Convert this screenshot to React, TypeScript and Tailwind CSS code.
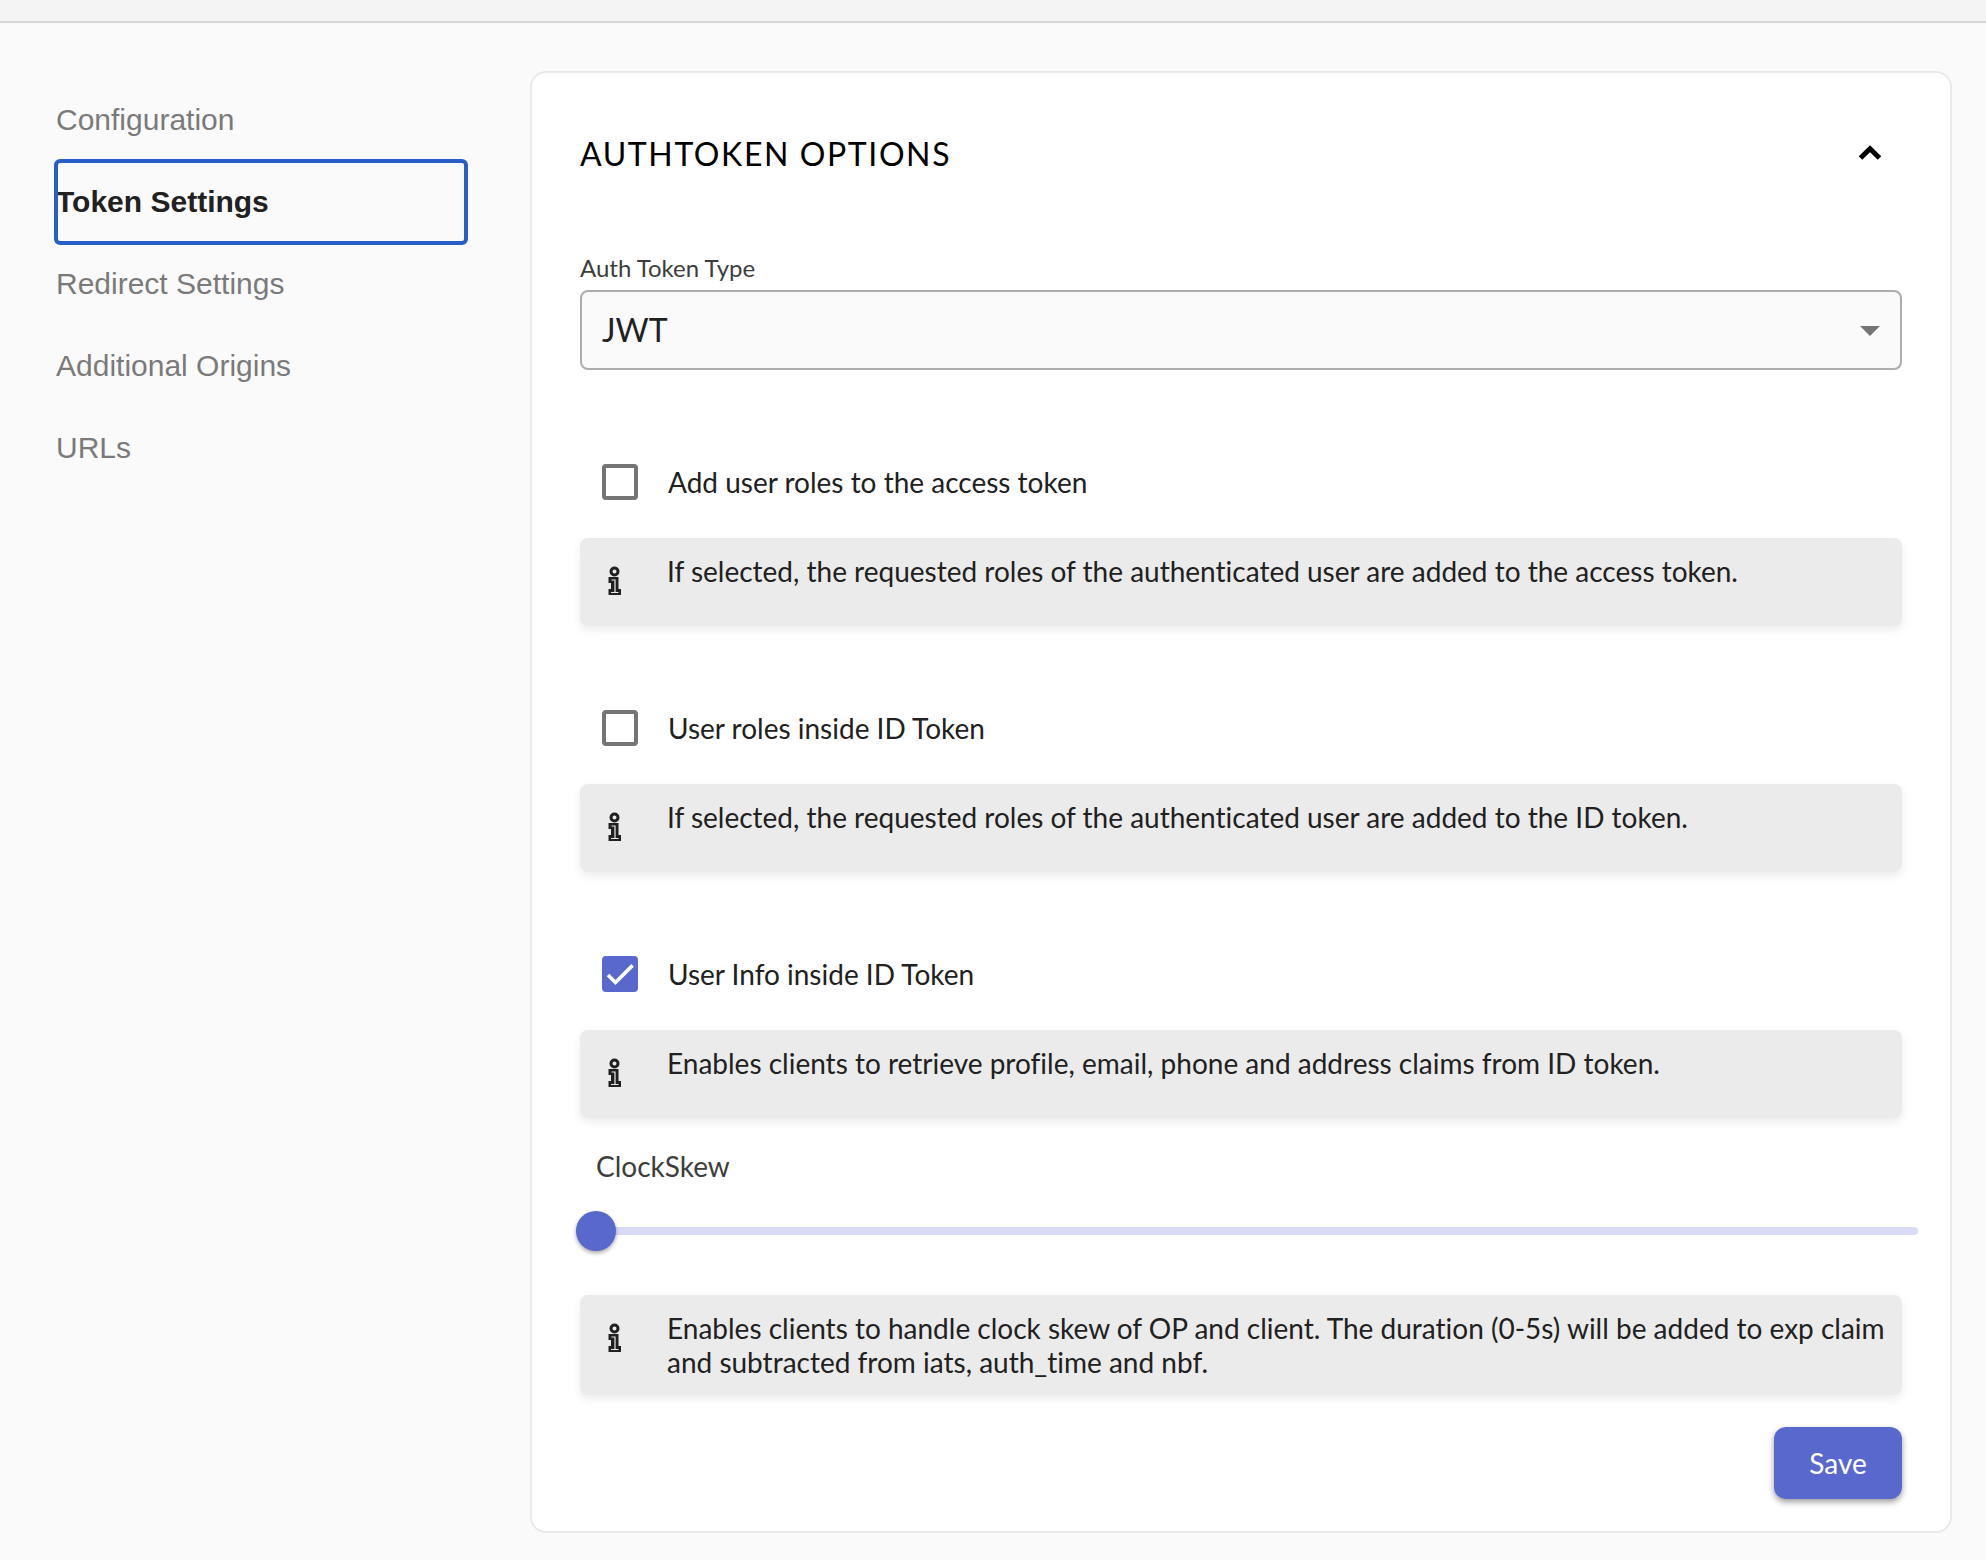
import { useState } from "react";

const NAV_ITEMS = ["Configuration", "Token Settings", "Redirect Settings", "Additional Origins", "URLs"];

const TOKEN_OPTIONS = [
  {
    id: "access-token-roles",
    label: "Add user roles to the access token",
    info: "If selected, the requested roles of the authenticated user are added to the access token.",
    checked: false,
  },
  {
    id: "id-token-roles",
    label: "User roles inside ID Token",
    info: "If selected, the requested roles of the authenticated user are added to the ID token.",
    checked: false,
  },
  {
    id: "id-token-userinfo",
    label: "User Info inside ID Token",
    info: "Enables clients to retrieve profile, email, phone and address claims from ID token.",
    checked: true,
  },
];

function InfoIcon() {
  return (
    <svg width="14" height="30" viewBox="0 0 14 30" fill="none" aria-hidden="true">
      <circle cx="6.5" cy="5.5" r="3.5" stroke="#212121" strokeWidth="3" />
      <path d="M0.5 11H10.5V23H13V29H0.5V23H3V17H0.5Z" fill="#212121" />
      <path d="M3.5 14H7V26M3 26.5H10.5" stroke="#ebebeb" strokeWidth="1.2" />
    </svg>
  );
}

function InfoBox({ text }: { text: string }) {
  return (
    <div className="flex min-h-[88px] items-start rounded-lg bg-[#ebebeb] py-4 pr-2 pl-7 shadow-[0_4px_10px_rgba(0,0,0,0.08)]">
      <span className="mt-3 w-[59px] shrink-0">
        <InfoIcon />
      </span>
      <p className="text-[28px] leading-[34px]">{text}</p>
    </div>
  );
}

interface OptionProps {
  id: string;
  label: string;
  info: string;
  checked: boolean;
  onChange: (checked: boolean) => void;
}

function Option(props: OptionProps) {
  const { id, label, info, checked, onChange } = props;

  return (
    <div>
      <div className="mb-9 flex h-10 items-center gap-[30px] pl-[22px]">
        <span className="relative size-9 shrink-0">
          <input
            id={id}
            type="checkbox"
            checked={checked}
            onChange={(e) => onChange(e.target.checked)}
            className="block size-9 appearance-none rounded border-4 border-[#757575] checked:border-[#5968cc] checked:bg-[#5968cc]"
          />
          {checked && (
            <svg className="pointer-events-none absolute inset-1 size-7" viewBox="0 0 24 24" fill="none" aria-hidden="true">
              <path d="M1.73 12.91 8.1 19.28 22.79 4.59" stroke="white" strokeWidth="3.12" />
            </svg>
          )}
        </span>
        <label htmlFor={id} className="text-[28px] leading-[34px]">
          {label}
        </label>
      </div>
      <InfoBox text={info} />
    </div>
  );
}

export default function App() {
  const [active, setActive] = useState("Token Settings");
  const [open, setOpen] = useState(true);
  const [skew, setSkew] = useState(0);
  const [options, setOptions] = useState(TOKEN_OPTIONS);

  const toggleOption = (id: string, checked: boolean) => {
    setOptions(options.map((o) => (o.id === id ? { ...o, checked } : o)));
  };

  return (
    <div className="min-h-screen bg-[#fafafa] font-[Lato,sans-serif] text-[#212121] [font-variant-ligatures:no-common-ligatures]">
      <header className="h-[23px] border-b-2 border-[#d6d6d6] bg-[#f4f4f4]" />

      <div className="flex items-start gap-16 pt-12 pr-[34px] pb-[27px] pl-14">
        <nav className="mt-2 flex w-[410px] shrink-0 flex-col font-['Liberation_Sans',Arial,sans-serif] text-[30px]">
          {NAV_ITEMS.map((item) => (
            <button
              key={item}
              type="button"
              onClick={() => setActive(item)}
              className={
                item === active
                  ? "h-[82px] rounded-sm pb-0.5 text-left font-bold outline-4 -outline-offset-2 outline-[#295ec9]"
                  : "h-[82px] pb-0.5 text-left text-[#7a7a7a]"
              }
            >
              {item}
            </button>
          ))}
        </nav>

        <main className="min-w-0 grow rounded-2xl border-2 border-[#e9e9e9] bg-white px-12 pt-[61px] pb-8">
          <div className="flex h-10 items-center justify-between pr-5">
            <h2 className="text-[32px] leading-10 tracking-wider text-black">AUTHTOKEN OPTIONS</h2>
            <button type="button" aria-label="Toggle section" aria-expanded={open} onClick={() => setOpen(!open)}>
              <svg
                className={open ? "block" : "block rotate-180"}
                width="24"
                height="18"
                viewBox="0 0 24 18"
                fill="none"
                aria-hidden="true"
              >
                <path
                  d="M2.5 13 12 3.7 21.5 13"
                  stroke="black"
                  strokeWidth="5"
                />
              </svg>
            </button>
          </div>

          {open && (
            <form onSubmit={(e) => e.preventDefault()}>
              <div className="mt-[79px]">
                <label htmlFor="token-type" className="mb-2 block text-[24px] leading-[29px] text-[#3d3d3d]">
                  Auth Token Type
                </label>
                <div className="relative">
                  <select
                    id="token-type"
                    className="block h-20 w-full appearance-none rounded-lg border-2 border-[#adadad] bg-[#fafafa] px-5 text-[32px]"
                  >
                    <option>JWT</option>
                    <option>Reference</option>
                  </select>
                  <svg
                    className="pointer-events-none absolute top-9 right-[22px]"
                    width="20"
                    height="10"
                    viewBox="0 0 20 10"
                    aria-hidden="true"
                  >
                    <path d="M0 0H20L10 10Z" fill="#757575" />
                  </svg>
                </div>
              </div>

              <div className="mt-[92px] flex flex-col gap-[82px]">
                {options.map((o) => (
                  <Option key={o.id} {...o} onChange={(checked) => toggleOption(o.id, checked)} />
                ))}
              </div>

              <div className="mt-[31px] mb-11">
                <label htmlFor="clock-skew" className="mb-7 ml-4 block text-[28px] leading-[34px] text-[#3d3d3d]">
                  ClockSkew
                </label>
                <div className="-mr-4 -ml-1">
                  <input
                    id="clock-skew"
                    type="range"
                    min={0}
                    max={5}
                    value={skew}
                    onChange={(e) => setSkew(Number(e.target.value))}
                    className="block h-10 w-full appearance-none bg-transparent [&::-webkit-slider-runnable-track]:h-2 [&::-webkit-slider-runnable-track]:rounded-full [&::-webkit-slider-runnable-track]:bg-[#d7dbf5] [&::-webkit-slider-thumb]:-mt-4 [&::-webkit-slider-thumb]:size-10 [&::-webkit-slider-thumb]:appearance-none [&::-webkit-slider-thumb]:rounded-full [&::-webkit-slider-thumb]:bg-[#5968cc] [&::-webkit-slider-thumb]:shadow-[0_2px_4px_rgba(0,0,0,0.35)]"
                  />
                </div>
              </div>

              <InfoBox text="Enables clients to handle clock skew of OP and client. The duration (0-5s) will be added to exp claim and subtracted from iats, auth_time and nbf." />

              <div className="mt-8 flex justify-end">
                <button
                  type="submit"
                  className="h-[72px] w-32 rounded-xl bg-[#5968cc] text-[28px] text-white shadow-[0_3px_6px_rgba(0,0,0,0.4)]"
                >
                  Save
                </button>
              </div>
            </form>
          )}
        </main>
      </div>
    </div>
  );
}
